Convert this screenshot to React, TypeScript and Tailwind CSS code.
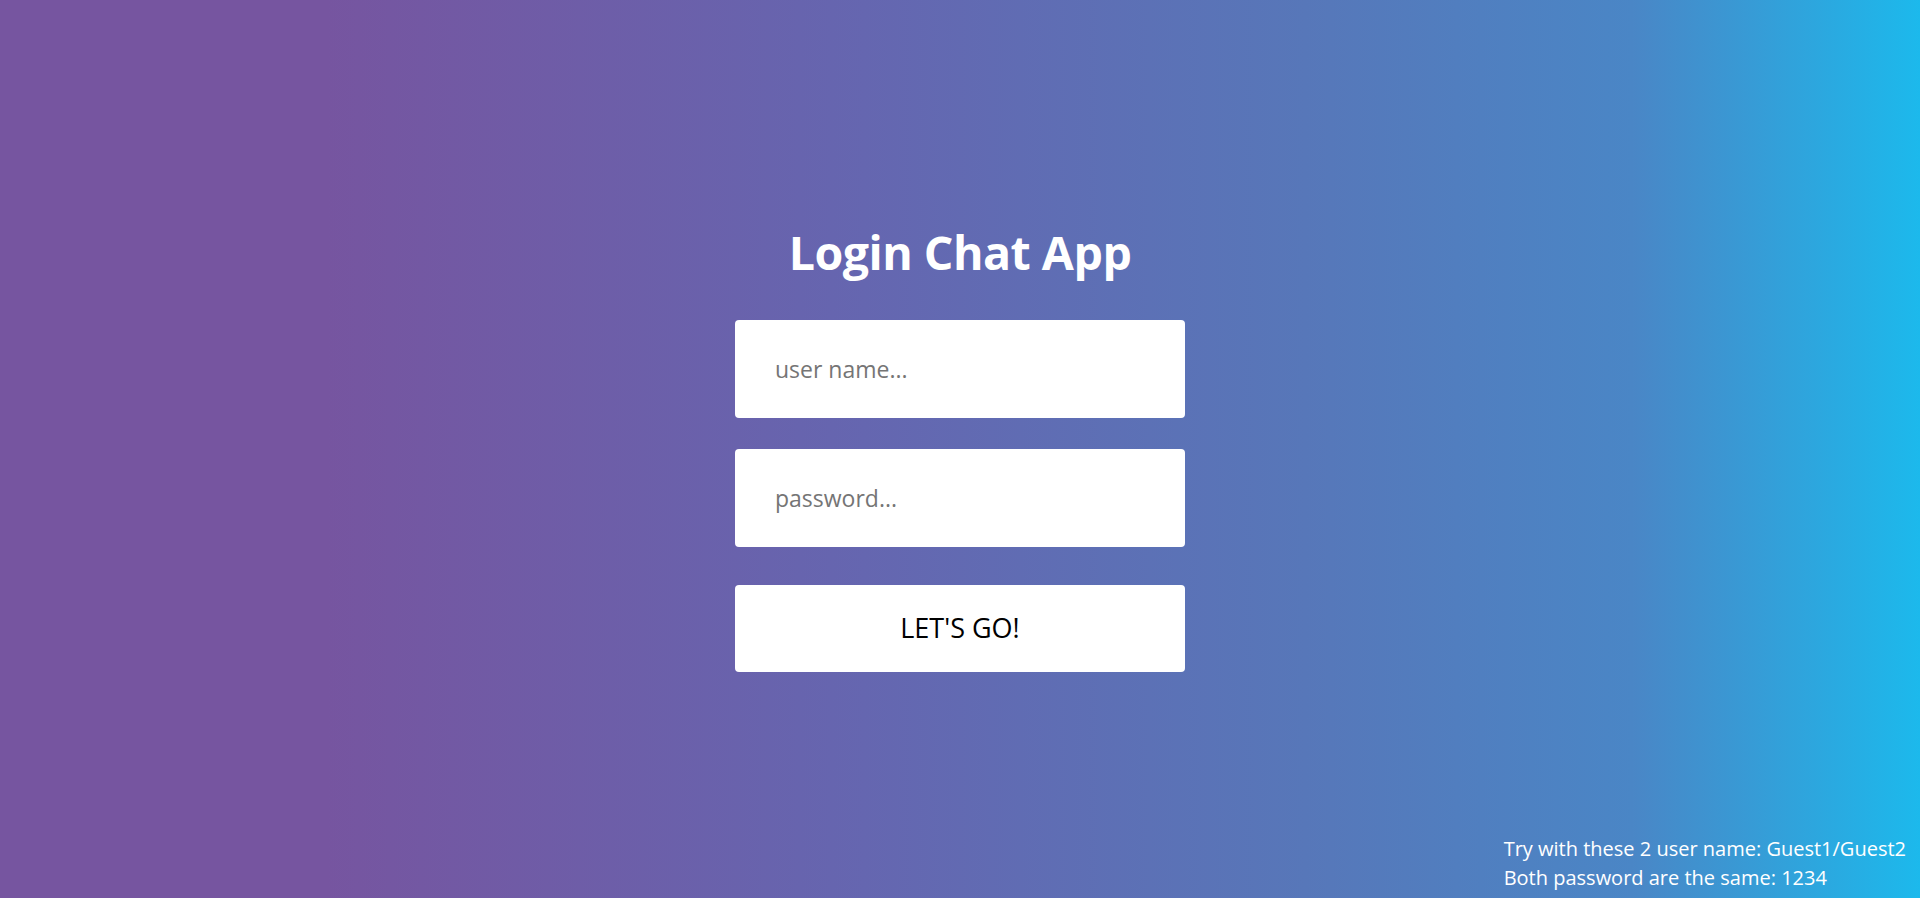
import { useState } from "react";

export default function App() {
  const [user, setUser] = useState("");
  const [pass, setPass] = useState("");

  return (
    <div
      className="relative flex h-screen w-full items-center justify-center bg-[linear-gradient(to_right,#7655a0_17%,#6566b0_45%,#5777b9_68%,#4a86c6_85%,#1cb9ec_100%)] font-['Open_Sans',sans-serif]"
    >
      <form
        className="flex w-[450px] flex-col items-center pb-[6px]"
        onSubmit={(e) => e.preventDefault()}
      >
        <h1 className="mb-[36px] text-[46.5px] leading-[64px] font-bold tracking-[-0.5px] text-white">Login Chat App</h1>
        <input
          value={user}
          onChange={(e) => setUser(e.target.value)}
          placeholder="user name..."
          className="h-[98px] w-full rounded-[4px] bg-white px-10 text-[23px] text-black outline-none placeholder:text-[#757575]"
        />
        <input
          type="password"
          value={pass}
          onChange={(e) => setPass(e.target.value)}
          placeholder="password..."
          className="mt-[31px] h-[98px] w-full rounded-[4px] bg-white px-10 text-[23px] text-black outline-none placeholder:text-[#757575]"
        />
        <button
          type="submit"
          className="mt-[38px] h-[87px] w-full rounded-[4px] bg-white text-[27px] text-black"
        >
          LET'S GO!
        </button>
      </form>

      <div className="absolute right-[14px] bottom-[6px] text-[20px] leading-[29px] text-white">
        <p>Try with these 2 user name: Guest1/Guest2</p>
        <p>Both password are the same: 1234</p>
      </div>
    </div>
  );
}
